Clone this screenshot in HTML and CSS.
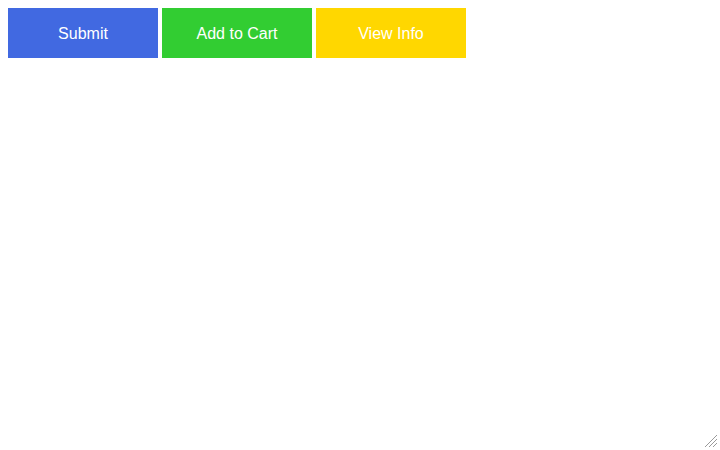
FILE: index.html
```html
<!DOCTYPE html>
<html>
<head>
<meta charset="utf-8">
<link rel="stylesheet" href="styles.css">
</head>
<body>
<div class="button-row">
  <button class="btn btn-blue">Submit</button>
  <button class="btn btn-green">Add to Cart</button>
  <button class="btn btn-gold">View Info</button>
</div>
<svg class="grip" width="14" height="14" viewBox="0 0 14 14">
  <line x1="13" y1="1" x2="1" y2="13" stroke="#9a9a9a" stroke-width="1"/>
  <line x1="13" y1="5" x2="5" y2="13" stroke="#9a9a9a" stroke-width="1"/>
  <line x1="13" y1="9" x2="9" y2="13" stroke="#9a9a9a" stroke-width="1"/>
</svg>
</body>
</html>
```
FILE: styles.css
```css
html, body {
  height: 100%;
}
body {
  margin: 8px;
  background: #ffffff;
  font-family: "Liberation Sans", Arial, sans-serif;
}
.button-row {
  display: flex;
  gap: 4px;
}
.btn {
  width: 150px;
  height: 50px;
  border: none;
  margin: 0;
  padding: 2px 0 0 0;
  color: #ffffff;
  font-family: "Liberation Sans", Arial, sans-serif;
  font-size: 16px;
}
.btn-blue { background: #4169e1; }
.btn-green { background: #32cd32; }
.btn-gold { background: #ffd700; }
.grip {
  position: fixed;
  right: 2px;
  bottom: 2px;
}
```
